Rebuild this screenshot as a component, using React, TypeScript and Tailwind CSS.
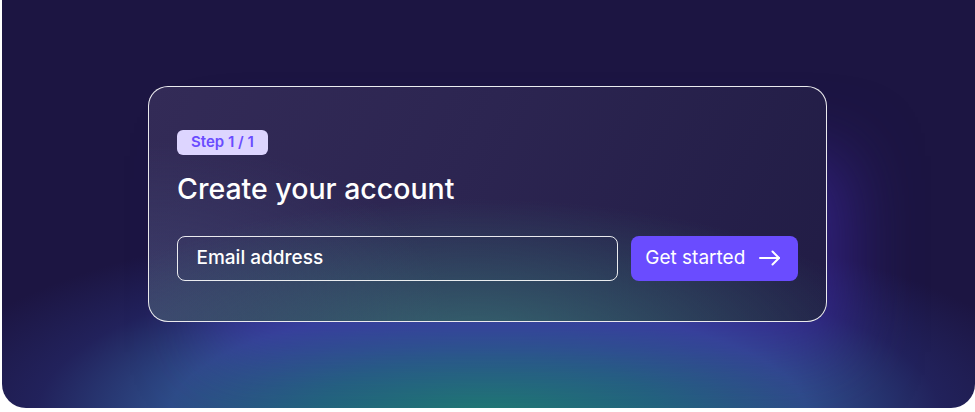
function ArrowIcon() {
  return (
    <svg width="22" height="16" viewBox="0 0 22 16" fill="none" stroke="currentColor" strokeWidth="2" strokeLinecap="round" strokeLinejoin="round">
      <path d="M1 8h19" />
      <path d="M13.5 1.5 20 8l-6.5 6.5" />
    </svg>
  );
}

export default function App() {
  return (
    <div className="w-[975px] h-[412px] bg-white font-['Inter',sans-serif]">
      <div className="ml-[2px] h-[408px] rounded-b-[24px] overflow-hidden bg-[#1c1542] bg-[radial-gradient(ellipse_580px_200px_at_50%_102%,#1f7a72_0%,#22647c_30%,#2e4c88_55%,rgba(38,44,112,0.55)_78%,rgba(28,21,66,0)_100%)] flex items-start justify-center pt-[86px]">
        <div className="ml-[-2px] w-[679px] h-[236px] rounded-[20px] border border-white/90 bg-[radial-gradient(ellipse_420px_150px_at_48%_112%,rgba(55,115,118,0.85),rgba(55,115,118,0)),radial-gradient(ellipse_300px_180px_at_0%_100%,rgba(70,80,125,0.6),rgba(70,80,125,0)),linear-gradient(115deg,#332b57_0%,#2c2551_45%,#211c45_100%)] shadow-[40px_50px_70px_-20px_rgba(72,46,190,0.5)] px-[28px] pt-[42px]">
          <span className="inline-flex h-[25px] items-center rounded-[6px] bg-[#ddd5ff] px-[14px] text-[15px] font-semibold text-[#6a4cff]">
            Step 1 / 1
          </span>
          <h1 className="mt-[16px] text-[28.5px] leading-[36px] font-medium text-white">
            Create your account
          </h1>
          <div className="mt-[29px] flex gap-[13px]">
            <div className="flex h-[45px] w-[442px] items-center rounded-[8px] border-[1.5px] border-white/90 px-[18.5px] text-[19px] font-medium text-white">
              Email address
            </div>
            <button className="flex h-[45px] w-[167px] items-center gap-[14px] rounded-[8px] bg-[#6a4cff] pl-[14px] text-[19px] text-white">
              Get started
              <ArrowIcon />
            </button>
          </div>
        </div>
      </div>
    </div>
  );
}
